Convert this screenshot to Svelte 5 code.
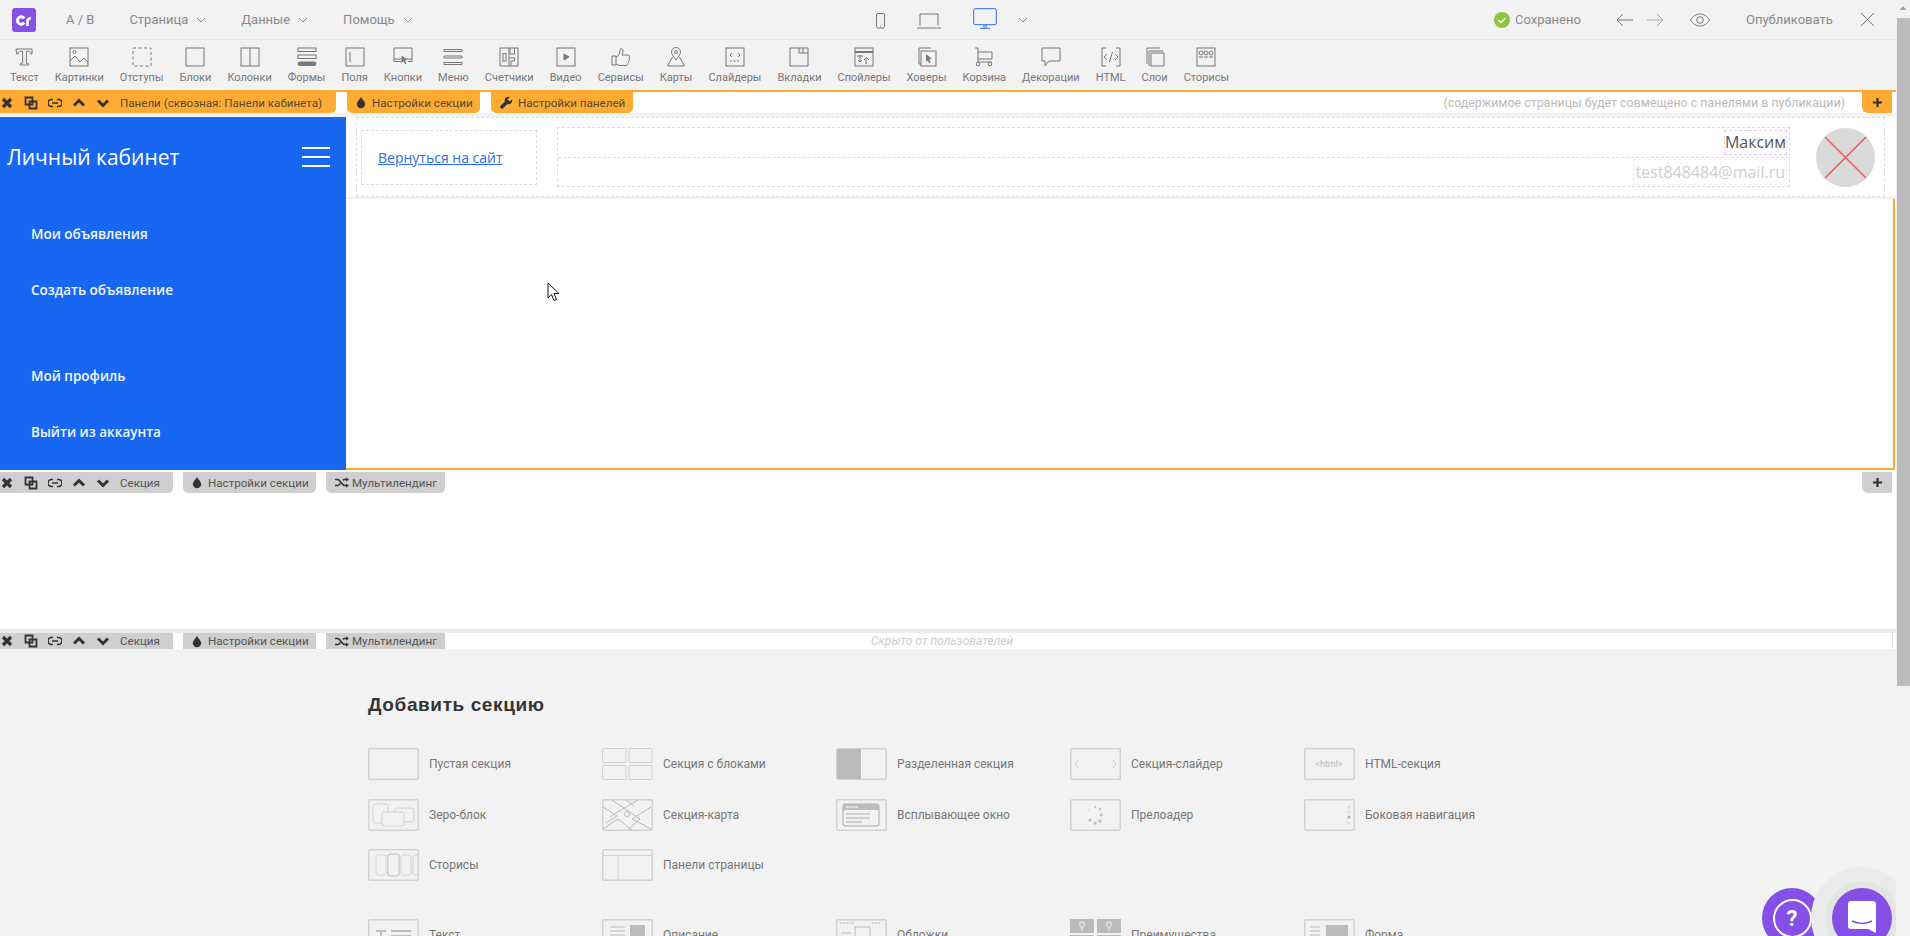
<script lang="ts">
	const menu = ['Страница', 'Данные', 'Помощь'];

	const tools = [
		{ label: 'Текст', icon: '<path d="M2 2h16v5h-1c0-1.600-1-2.800-3-2.800h-1.600V16l2.400 1v1H6.200v-1l2.400-1V4.200H7C5 4.200 4 5.400 4 7H2.800z"/>' },
		{ label: 'Картинки', icon: '<rect x="1" y="1" width="18" height="18"/><circle cx="5.500" cy="5" r="1.500"/><path d="M1 14l5-5 5 6 4-4 4 5"/>' },
		{ label: 'Отступы', icon: '<rect x="1" y="1" width="18" height="18" stroke-dasharray="3 2.500"/>' },
		{ label: 'Блоки', icon: '<rect x="1" y="1" width="18" height="18"/>' },
		{ label: 'Колонки', icon: '<rect x="1" y="1" width="18" height="18"/><path d="M10 1v18"/>' },
		{ label: 'Формы', icon: '<rect x="1" y="1" width="18" height="3.500"/><rect x="1" y="8" width="18" height="3.500"/><rect x="1" y="15" width="18" height="3.500" rx="1.700" fill="#777"/>' },
		{ label: 'Поля', icon: '<rect x="1" y="1" width="18" height="18"/><path d="M5 5v10"/>' },
		{ label: 'Кнопки', icon: '<path d="M8 14.500H1V1h18v13.500h-4M1 12h7.500M13 12h6"/><path d="M8.500 8.500l6 4.500-2.700.4 1.700 3-1.300.8-1.700-3-2 2z" fill="#777" stroke="none"/>' },
		{ label: 'Меню', icon: '<path d="M1 2.500h18v2H1zM1 9h18v2H1zM1 15.500h18v2H1z"/>' },
		{ label: 'Счетчики', icon: '<rect x="1" y="1" width="18" height="18"/><rect x="4" y="6.500" width="3" height="7.500"/><path d="M10 1v18M11 1v6h4.500V1M15.500 7v0M10 11h5.500v3H12v5"/>' },
		{ label: 'Видео', icon: '<rect x="1" y="1" width="18" height="18"/><path d="M8 7l5 3-5 3z" fill="#777"/>' },
		{ label: 'Сервисы', icon: '<path d="M1 9h4v9H1zM5 10c3-1 4-4 4-7 0-2 3-2 3 1 0 2-.5 3-1 4h6c2 0 2 2 1 3 1 1 .6 2.500-.4 3 .4 1 0 2-.8 2.500.2 1-.5 2-2 2H9c-2 0-2-1-4-1"/>' },
		{ label: 'Карты', icon: '<path d="M10 13C7 9 5.500 7 5.500 5a4.500 4.500 0 0 1 9 0c0 2-1.500 4-4.500 8z"/><circle cx="10" cy="5" r="1.500"/><path d="M6.500 10L1.500 19h17l-5-9"/>' },
		{ label: 'Слайдеры', icon: '<rect x="1" y="1" width="18" height="18"/><path d="M7 6L5 8l2 2M13 6l2 2-2 2"/><path d="M5 14h10" stroke-dasharray="2 1.500"/>' },
		{ label: 'Вкладки', icon: '<path d="M1 1h18v18H1zM10 1v5h9M14 1v5"/>' },
		{ label: 'Спойлеры', icon: '<rect x="1" y="1" width="18" height="18"/><path d="M1 4.500h18M1 5.500h18M3 9h6M6 8v7M4 13l2 2 2-2M12 17v-6M10 13l2.500-2.500L15 13"/>' },
		{ label: 'Ховеры', icon: '<path d="M14 1H2v16h2"/><rect x="4" y="4" width="15" height="15"/><path d="M9 7l6 5-3 .6 1.500 3-1.500.6-1.500-3L9 15z" fill="#777" stroke="none"/>' },
		{ label: 'Корзина', icon: '<path d="M1 1h3v14h14M4 5h14v7H4"/><circle cx="4" cy="17" r="1.800"/><circle cx="16" cy="17" r="1.800"/>' },
		{ label: 'Декорации', icon: '<path d="M1 1h18v13H8l-4 5v-5H1z"/>' },
		{ label: 'HTML', icon: '<path d="M5 1H1v18h4M15 1h4v18h-4M6 7l-3 3 3 3M14 7l3 3-3 3M11.500 5l-3 10"/>' },
		{ label: 'Слои', icon: '<path d="M15 1H2v16M18 4H4v15M6 6h13v13H6z"/>' },
		{ label: 'Сторисы', icon: '<rect x="1" y="1" width="18" height="18"/><circle cx="5" cy="6" r="2"/><circle cx="10" cy="6" r="2"/><circle cx="15" cy="6" r="2"/><path d="M3 10h4M8 10h4M13 10h4"/>' }
	];

	const sections = [
		{ label: 'Пустая секция', icon: '' },
		{ label: 'Секция с блоками', plain: true, icon: '<rect x=".5" y=".5" width="23.500" height="14" rx="1"/><rect x="27" y=".5" width="23" height="14" rx="1"/><rect x=".5" y="17.500" width="23.500" height="14" rx="1"/><rect x="27" y="17.500" width="23" height="14" rx="1"/>' },
		{ label: 'Разделенная секция', icon: '<rect x="1" y="1" width="24" height="30" fill="#bbb" stroke="none"/>' },
		{ label: 'Секция-слайдер', icon: '<path d="M8 12l-3 4 3 4M43 12l3 4-3 4" stroke="#ccc"/>' },
		{ label: 'HTML-секция', icon: '<text x="25" y="19" text-anchor="middle" class="thumb-text">&lt;html&gt;</text>' },
		{ label: 'Зеро-блок', icon: '<rect x="5" y="5" width="15" height="19" rx="2"/><rect x="27" y="9" width="19" height="14" rx="2"/><rect x="14" y="13" width="22" height="14" rx="2" fill="#f2f2f2"/>' },
		{ label: 'Секция-карта', icon: '<path d="M1 8l14 9L4 24M10 1l28 19-12 11M36 1L14 14l-6 4M49 8L30 20l19 10M1 30l15-10 14 11M24 1l8 6" stroke="#bbb"/><circle cx="25" cy="15" r="2.500" stroke="#bbb"/>' },
		{ label: 'Всплывающее окно', icon: '<rect x="7" y="5" width="36" height="22" rx="2" stroke="#aaa"/><rect x="7" y="5" width="36" height="6" fill="#bbb" stroke="none"/><path d="M10 8h12" stroke="#fff"/><path d="M10 15h24M10 19h24M10 23h16" stroke="#aaa"/>' },
		{ label: 'Прелоадер', icon: '<g fill="#bbb" stroke="none"><circle cx="25" cy="8" r="1"/><circle cx="30" cy="10" r="1.200"/><circle cx="31" cy="16" r="1.400"/><circle cx="30" cy="22" r="1.600"/><circle cx="25" cy="24" r="1.600"/><circle cx="20" cy="21" r="1.600"/><circle cx="19" cy="11" r="1" fill="#ddd"/></g>' },
		{ label: 'Боковая навигация', icon: '<g stroke="none"><circle cx="45" cy="8" r="1.500" fill="#ddd"/><circle cx="45" cy="13" r="1.500" fill="#ddd"/><circle cx="45" cy="18" r="1.500" fill="#aaa"/><circle cx="45" cy="24" r="1.500" fill="#ddd"/></g>' },
		{ label: 'Сторисы', icon: '<rect x="8" y="6" width="10" height="20" rx="2"/><rect x="20" y="5" width="11" height="22" rx="2" stroke="#bbb"/><rect x="33" y="6" width="10" height="20" rx="2"/><path d="M49 6c-3 0-4 1-4 2v16c0 1 1 2 4 2"/>' },
		{ label: 'Панели страницы', icon: '<path d="M1 6.500h48M16 6.500V31" />' },
		{ label: 'Текст', wrap: true, icon: '<path d="M8 12h10M13 12v10M23 12h20M23 17h20" stroke="#bbb" stroke-width="2"/>' },
		{ label: 'Описание', icon: '<path d="M8 8h15M8 12h15M8 16h15" stroke="#bbb"/><rect x="28" y="6" width="15" height="20" fill="#bbb" stroke="none"/>' },
		{ label: 'Обложки', icon: '<path d="M4 4h15M36 4h9" stroke="#bbb" stroke-dasharray="2 1"/><path d="M5 14h10M5 18h10" stroke="#bbb"/><rect x="19" y="8" width="15" height="20" stroke="#bbb"/>' },
		{ label: 'Преимущества', plain: true, icon: '<rect x="0" y="0" width="24" height="14" fill="#bbb" stroke="none"/><rect x="27" y="0" width="24" height="14" fill="#bbb" stroke="none"/><path d="M10 3h4v4l-2 2-2-2zM12 9v3M37 3h4v4l-2 2-2-2zM39 9v3" stroke="#eee"/><rect x="0" y="16" width="24" height="16" fill="#bbb" stroke="none"/><rect x="27" y="16" width="24" height="16" fill="#bbb" stroke="none"/>' },
		{ label: 'Форма', icon: '<path d="M6 8h10M6 12h10M6 16h10" stroke="#bbb"/><rect x="22" y="6" width="22" height="20" fill="#bbb" stroke="none"/>' }
	];

	const barIcons = [
		'<path d="M3 3l8 8M11 3l-8 8" stroke-width="3.200"/>',
		'<path d="M1.500 1.500h7v7h-7zM5.500 5.500h7v7h-7z" stroke-width="1.800" fill="none"/>',
		'<path d="M5 3.500H3.500a3.500 3.500 0 0 0 0 7H5M9 3.500h1.500a3.500 3.500 0 0 1 0 7H9M4 7h6" stroke-width="1.700" fill="none"/>',
		'<path d="M2 9.500l5-5 5 5" stroke-width="3" fill="none"/>',
		'<path d="M2 4.500l5 5 5-5" stroke-width="3" fill="none"/>'
	];
</script>

{#snippet chevron()}
	<svg class="chev" viewBox="0 0 10 6" width="10" height="6"><path d="M1 1l4 4 4-4" /></svg>
{/snippet}

{#snippet drop()}
	<svg class="tab-ico" viewBox="0 0 12 14" width="10" height="13"><path d="M6 0c1 3 5 5.500 5 9a5 5 0 0 1-10 0c0-3.500 4-6 5-9z" /></svg>
{/snippet}

{#snippet bar(title: string, second: string, isPanels: boolean, hidden: boolean)}
	<div class="bar" class:bar-orange={isPanels} class:bar-hidden={hidden}>
		<div class="tab tab-main">
			{#each barIcons as ico}
				<svg class="bar-ico" viewBox="0 0 14 14" width="14" height="14">{@html ico}</svg>
			{/each}
			<span class="tab-title">{title}</span>
		</div>
		<div class="tab tab-settings">
			{@render drop()}
			<span>Настройки секции</span>
		</div>
		<div class="tab tab-second">
			{#if isPanels}
				<svg class="tab-ico" viewBox="0 0 14 14" width="13" height="13"><path d="M13 3.500L10.500 6 8 3.500 10.500 1C8 0 5 1.500 5 4.500c0 .6.100 1 .3 1.500L.7 10.600a1.800 1.800 0 0 0 2.600 2.600L8 8.700c3 1 6-1.500 5-5.200z" /></svg>
			{:else}
				<svg class="tab-ico shuffle" viewBox="0 0 16 12" width="14" height="11"><path d="M0 2.500h3c3 0 5 7 8 7h2M0 9.500h3c1.300 0 2.300-1.200 3.200-2.500M9 3.600c.6-.7 1.300-1.100 2-1.100h2" /><path class="fill" d="M12.500 0l3.500 2.500L12.500 5zM12.500 7l3.500 2.500-3.500 2.500z" /></svg>
			{/if}
			<span>{second}</span>
		</div>
		{#if isPanels}
			<span class="bar-hint">(содержимое страницы будет совмещено с панелями в публикации)</span>
		{:else if hidden}
			<span class="bar-hidden-note">Скрыто от пользователей</span>
		{/if}
		{#if !hidden}
			<div class="tab tab-plus" class:push={!isPanels}>
				<svg viewBox="0 0 12 12" width="11" height="11"><path d="M6 1v10M1 6h10" /></svg>
			</div>
		{/if}
	</div>
{/snippet}

<div class="page">
	<div class="main">
		<header class="topbar">
			<div class="top-left">
				<div class="logo">
					<svg viewBox="0 0 24 24" width="24" height="24"><path d="M12.200 10.300a3.700 3.700 0 1 0 0 4.400" /><path class="logo-r" d="M15.500 18v-4.500c0-2 1.300-3.200 3.500-3.200" /></svg>
				</div>
				<span class="ab">A / B</span>
				{#each menu as item}
					<span class="menu-item">{item}{@render chevron()}</span>
				{/each}
			</div>
			<div class="devices">
				<svg class="dev phone" viewBox="0 0 10 16" width="10" height="16"><rect x=".5" y=".5" width="8" height="14.500" rx="1.500" /><path d="M4 13h1" /></svg>
				<svg class="dev laptop" viewBox="0 0 24 16" width="24" height="16"><path d="M3 12.500V1h18v11.500M0 15h24" /></svg>
				<svg class="dev desktop" viewBox="0 0 24 21" width="24" height="21"><rect x=".7" y=".7" width="22.600" height="16" rx="1.500" /><path d="M11 17v3M13 17v3M7 20.300h10" /></svg>
				{@render chevron()}
			</div>
			<div class="top-right">
				<svg class="saved-ico" viewBox="0 0 16 16" width="16" height="16"><circle cx="8" cy="8" r="8" fill="#8cc63f" /><path d="M4.500 8l2.500 2.500 4.500-4.500" fill="none" stroke="#fff" stroke-width="1.300" /></svg>
				<span class="saved">Сохранено</span>
				<svg class="nav-ico" viewBox="0 0 18 14" width="18" height="14"><path d="M17 7H1M7 1L1 7l6 6" /></svg>
				<svg class="nav-ico next" viewBox="0 0 18 14" width="18" height="14"><path d="M1 7h16M11 1l6 6-6 6" /></svg>
				<svg class="nav-ico eye" viewBox="0 0 20 14" width="20" height="14"><path d="M.5 7C3 3 6 1 10 1s7 2 9.500 6C17 11 14 13 10 13S3 11 .5 7z" /><circle cx="10" cy="7" r="3.300" /></svg>
				<span class="publish">Опубликовать</span>
				<svg class="nav-ico close" viewBox="0 0 15 15" width="15" height="15"><path d="M1 1l13 13M14 1L1 14" /></svg>
			</div>
		</header>

		<nav class="tools">
			{#each tools as t}
				<div class="tool">
					<svg class="tool-ico" viewBox="0 0 20 20" width="20" height="20">{@html t.icon}</svg>
					<span>{t.label}</span>
				</div>
			{/each}
		</nav>

		<section class="panels">
			{@render bar('Панели (сквозная: Панели кабинета)', 'Настройки панелей', true, false)}
			<div class="panels-body">
				<aside class="sidebar">
					<div class="side-head">
						<span class="side-title">Личный кабинет</span>
						<div class="burger"><i></i><i></i><i></i></div>
					</div>
					<div class="side-links">
						<a href="#a">Мои объявления</a>
						<a href="#a">Создать объявление</a>
						<a class="gap" href="#a">Мой профиль</a>
						<a href="#a">Выйти из аккаунта</a>
					</div>
				</aside>
				<div class="content">
					<div class="head-row">
						<div class="head-box">
							<div class="back"><a href="#a">Вернуться на сайт</a></div>
							<div class="who">
								<div class="who-row first"><span class="name">Максим</span></div>
								<div class="who-row"><span class="email">test848484@mail.ru</span></div>
							</div>
							<svg class="avatar" viewBox="0 0 59 59" width="59" height="59">
								<ellipse cx="29.500" cy="29.500" rx="29.500" ry="29.500" fill="#d9d9d9" />
								<path d="M9 9l41 41M50 9L9 50" stroke="#f05a5a" stroke-width="1.500" />
							</svg>
						</div>
					</div>
				</div>
			</div>
		</section>

		<section class="blank">
			{@render bar('Секция', 'Мультилендинг', false, false)}
		</section>

		<section class="hidden-sec">
			{@render bar('Секция', 'Мультилендинг', false, true)}
		</section>

		<div class="add">
			<h2>Добавить секцию</h2>
			<div class="grid">
				{#each sections as s}
					<div class="item" class:wrap={s.wrap}>
						<svg class="thumb" class:plain={s.plain} viewBox="0 0 51 32" width="51" height="32">
							{#if !s.plain}<rect class="frame" x=".75" y=".75" width="49.500" height="30.500" rx="1.500" />{/if}
							{@html s.icon}
						</svg>
						<span>{s.label}</span>
					</div>
				{/each}
			</div>
		</div>

		<svg class="cursor" viewBox="0 0 13 20" width="13" height="20"><path d="M1 1v15l3.500-3.500 2.500 6 2.500-1-2.500-6h5z" fill="#fff" stroke="#111" /></svg>

		<div class="widgets">
			<div class="help">
				<span>?</span>
			</div>
			<div class="chat">
				<svg viewBox="0 0 28 32" width="28" height="32"><path d="M3 0h22a3 3 0 0 1 3 3v29l-8-4H3a3 3 0 0 1-3-3V3a3 3 0 0 1 3-3z" fill="#fff" /><path d="M4 20c6 3 14 3 20 0" fill="none" stroke="#8550e6" stroke-width="1.600" /></svg>
			</div>
		</div>
	</div>
	<div class="scrollbar">
		<svg viewBox="0 0 14 18" width="14" height="18"><path d="M3.500 10L7 6l3.500 4z" fill="#a3a3a3" /></svg>
		<div class="thumb-bar"></div>
	</div>
</div>

<style>
	:global(body) {
		margin: 0;
		background: #f2f2f2;
	}
	.page {
		display: flex;
		width: 1910px;
		height: 936px;
		overflow: hidden;
		font-family: Roboto, 'Liberation Sans', sans-serif;
		background: #f2f2f2;
	}
	.main {
		position: relative;
		width: 1896px;
		height: 936px;
		overflow: hidden;
	}
	.scrollbar {
		width: 14px;
		background: #f1f1f1;
	}
	.scrollbar svg {
		display: block;
	}
	.thumb-bar {
		height: 668px;
		margin-left: 1px;
		background: #bcbcbc;
	}

	.topbar {
		display: grid;
		grid-template-columns: 876px 1fr auto;
		align-items: center;
		height: 39px;
		border-bottom: 1px solid #e6e6e6;
		color: #8a8a8a;
		font-size: 13px;
	}
	.top-left {
		display: flex;
		align-items: center;
		gap: 35px;
		padding-left: 12px;
	}
	.logo {
		width: 24px;
		height: 24px;
		margin-right: -5px;
		border-radius: 3px;
		background: #8550e6;
	}
	.logo svg {
		display: block;
		fill: none;
		stroke: #fff;
		stroke-width: 3;
	}
	.logo-r {
		stroke-width: 2.600;
	}
	.menu-item {
		display: flex;
		align-items: center;
		gap: 8px;
	}
	.chev {
		fill: none;
		stroke: #8a8a8a;
	}
	.devices {
		display: flex;
		align-items: center;
	}
	.dev {
		fill: none;
		stroke: #777;
	}
	.phone {
		margin-top: 3px;
	}
	.laptop {
		margin-left: 31px;
		margin-top: 3px;
	}
	.desktop {
		margin-left: 32px;
		margin-top: -3px;
		margin-right: 21px;
		stroke: #2a6ef0;
	}
	.top-right {
		display: flex;
		align-items: center;
		padding-right: 21px;
	}
	.saved {
		margin-left: 5px;
		width: 101px;
	}
	.nav-ico {
		fill: none;
		stroke: #777;
	}
	.next {
		margin-left: 12px;
		stroke: #aaa;
	}
	.eye {
		margin-left: 26px;
	}
	.publish {
		margin-left: 36px;
		width: 114px;
	}

	.tools {
		display: flex;
		gap: 16px;
		height: 50px;
		padding-left: 10px;
		box-sizing: border-box;
		color: #777;
		font-size: 11px;
	}
	.tool {
		display: flex;
		flex-direction: column;
		align-items: center;
		padding-top: 7px;
	}
	.tool span {
		margin-top: 4px;
		white-space: nowrap;
	}
	.tool-ico {
		fill: none;
		stroke: #777;
		stroke-width: 1;
	}

	.bar {
		display: flex;
		height: 21px;
		color: #555;
		font-size: 11.600px;
	}
	.tab {
		display: flex;
		align-items: center;
		height: 100%;
		background: #cfcfcf;
		border-radius: 0 0 5px 5px;
		white-space: nowrap;
	}
	.bar-orange .tab {
		background: #ffab33;
		color: #4d4d3a;
	}
	.bar-hidden .tab {
		border-radius: 0;
	}
	.tab-main {
		padding-right: 0;
		border-bottom-left-radius: 0;
		width: 173px;
		box-sizing: border-box;
	}
	.bar-orange .tab-main {
		width: 336px;
	}
	.bar-ico {
		flex: none;
		margin-right: 10px;
		fill: #333;
		stroke: #333;
	}
	.tab-settings {
		width: 133px;
		margin-left: 10px;
		padding-left: 9px;
		box-sizing: border-box;
		gap: 6px;
	}
	.tab-second {
		width: 119px;
		box-sizing: border-box;
		margin-left: 10px;
		padding-left: 9px;
		gap: 3px;
	}
	.bar-orange .tab-settings {
		margin-left: 11px;
	}
	.bar-orange .tab-second {
		width: 142px;
		margin-left: 11px;
		gap: 5px;
	}
	.tab-ico {
		fill: #333;
	}
	.shuffle {
		fill: none;
		stroke: #333;
		stroke-width: 1.800;
	}
	.shuffle .fill {
		fill: #333;
		stroke: none;
	}
	.bar-hint {
		margin-left: auto;
		margin-right: 17px;
		line-height: 22px;
		font-size: 12.400px;
		color: #bbb;
	}
	.tab-plus {
		width: 30px;
		justify-content: center;
		border-radius: 0 0 0 6px;
	}
	.tab-plus svg {
		fill: none;
		stroke: #333;
		stroke-width: 2.400;
	}
	.push {
		margin-left: auto;
		margin-right: 4px;
	}

	.panels {
		height: 380px;
		border-top: 2px solid #ffab33;
		box-sizing: border-box;
		background: #fff;
		display: flex;
		flex-direction: column;
	}
	.panels .bar {
		flex: none;
		padding-right: 4px;
	}
	.panels-body {
		flex: 1;
		min-height: 0;
		display: flex;
		margin-top: 4px;
		box-shadow: 0 -4px 0 #f2f2f2;
	}
	.sidebar {
		width: 346px;
		background: #1767f3;
		color: #fff;
		font-family: 'Open Sans', sans-serif;
	}
	.side-head {
		display: flex;
		align-items: center;
		justify-content: space-between;
		height: 80px;
		padding: 0 16px 0 7px;
	}
	.side-title {
		font-size: 21px;
	}
	.burger i {
		display: block;
		width: 28px;
		height: 2px;
		margin: 7px 0;
		background: #fff;
	}
	.side-links {
		display: flex;
		flex-direction: column;
		padding: 26px 0 0 31px;
	}
	.side-links a {
		height: 56px;
		line-height: 22px;
		color: #f2f6ff;
		font-size: 13.500px;
		font-weight: 600;
		text-decoration: none;
	}
	.side-links a:last-child {
		height: 22px;
	}
	.side-links .gap {
		margin-top: 30px;
	}
	.content {
		flex: 1;
		margin-right: 1px;
		border-right: 2px solid #ffab33;
		border-bottom: 2px solid #ffab33;
	}
	.head-row {
		height: 82px;
		margin-right: -3px;
		background: #fff;
		border-bottom: 2px solid #f0f0f0;
		box-sizing: border-box;
		padding: 0 11px 0 10px;
	}
	.head-box {
		display: flex;
		align-items: center;
		height: 80px;
		box-sizing: border-box;
		border: 1px dashed #ddd;
	}
	.back {
		display: flex;
		align-items: center;
		width: 176px;
		height: 55px;
		margin-left: 4px;
		padding-left: 16px;
		box-sizing: border-box;
		border: 1px dashed #ddd;
		font-family: 'Open Sans', sans-serif;
		font-size: 14px;
	}
	.back a {
		color: #2a6ef0;
	}
	.who {
		display: flex;
		flex-direction: column;
		width: 1233px;
		height: 60px;
		margin-left: 20px;
		box-sizing: border-box;
		border: 1px dashed #ddd;
		font-family: 'Open Sans', sans-serif;
		font-size: 16px;
	}
	.who-row {
		flex: 1;
		display: flex;
		justify-content: flex-end;
		align-items: center;
		padding-right: 2px;
	}
	.who-row.first {
		border-bottom: 1px dashed #ddd;
		padding-bottom: 1px;
	}
	.name {
		line-height: 23px;
		color: #555;
		border: 1px dashed #dccff6;
	}
	.email {
		padding: 0 1px;
		line-height: 24px;
		color: #cfcfcf;
		border: 1px dashed #f0ecfa;
	}
	.avatar {
		margin-left: 26px;
	}

	.blank {
		height: 159px;
		padding-top: 2px;
		box-sizing: border-box;
		background: #fff;
	}
	.hidden-sec {
		height: 20px;
		box-sizing: border-box;
		border-top: 4px solid #ebebeb;
		background: #fff;
	}
	.hidden-sec .bar {
		height: 16px;
		line-height: 16px;
		border-right: 1px solid #e6e6e6;
		margin-right: 3px;
		overflow: hidden;
	}
	.bar-hidden-note {
		margin-left: 426px;
		font-size: 12px;
		font-style: italic;
		color: #ccc;
	}

	.add {
		padding: 45px 0 0 368px;
	}
	h2 {
		margin: 0 0 33px;
		font-family: 'Liberation Sans', Arial, sans-serif;
		font-size: 19px;
		line-height: 21px;
		font-weight: 700;
		letter-spacing: 0.6px;
		color: #333;
	}
	.grid {
		display: grid;
		grid-template-columns: repeat(5, 234px);
		grid-template-rows: 51px 50px 70px 32px;
	}
	.item {
		display: flex;
		align-items: center;
		gap: 10px;
		height: 32px;
		color: #777;
		font-size: 12px;
	}
	.wrap {
		grid-column: 1;
	}
	.thumb {
		flex: none;
		fill: none;
		stroke: #d2d2d2;
		stroke-width: 1;
	}
	.frame {
		stroke-width: 1.500;
	}
	:global(.thumb-text) {
		font-family: Roboto, sans-serif;
		font-size: 9px;
		fill: #bbb;
		stroke: none;
	}

	.cursor {
		position: absolute;
		left: 547px;
		top: 282px;
	}
	.widgets {
		position: absolute;
		left: 1762px;
		top: 888px;
		display: flex;
		gap: 10px;
	}
	.help,
	.chat {
		display: flex;
		align-items: center;
		justify-content: center;
		width: 60px;
		height: 60px;
		border-radius: 50%;
		background: #8550e6;
	}
	.help span {
		display: flex;
		align-items: center;
		justify-content: center;
		width: 35px;
		height: 35px;
		border: 2px solid #fff;
		border-radius: 50%;
		color: #fff;
		font-size: 22px;
		font-weight: 700;
	}
	.chat {
		box-shadow: 0 0 0 7px #e4e4e4, 0 0 0 21px #ebebeb;
	}
	.chat svg {
		margin-top: -2px;
	}
</style>
